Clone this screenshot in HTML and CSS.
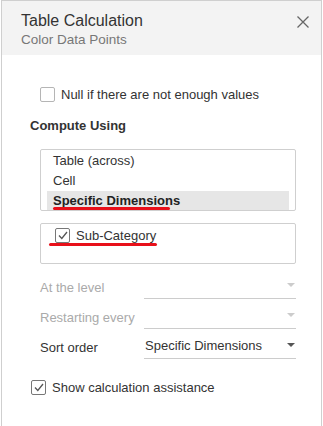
FILE: index.html
```html
<!DOCTYPE html>
<html>
<head>
<meta charset="utf-8">
<link rel="stylesheet" href="styles.css">
</head>
<body>
<div class="panel">
  <div class="header">
    <div class="titles">
      <div class="title">Table Calculation</div>
      <div class="subtitle">Color Data Points</div>
    </div>
    <svg class="close" width="12" height="12" viewBox="0 0 12 12"><path d="M0.5 0.5 L11.5 11.5 M11.5 0.5 L0.5 11.5" stroke="#666" stroke-width="1.3" fill="none"/></svg>
  </div>
  <div class="body">
    <label class="check null-row"><span class="box"></span><span>Null if there are not enough values</span></label>
    <div class="section">Compute Using</div>
    <div class="list">
      <div class="item">Table (across)</div>
      <div class="item">Cell</div>
      <div class="item selected">Specific Dimensions</div>
    </div>
    <div class="dims">
      <div class="dim"><span class="box checked"><svg width="10" height="9" viewBox="0 0 10 9"><path d="M1 4.5 L3.8 7.5 L9 1" stroke="#555" stroke-width="1.3" fill="none"/></svg></span><span>Sub-Category</span><span class="dimline"></span></div>
    </div>
    <div class="field disabled"><span class="flabel">At the level</span><span class="fsel"><span></span><span class="arrow"></span></span></div>
    <div class="field disabled"><span class="flabel">Restarting every</span><span class="fsel"><span></span><span class="arrow"></span></span></div>
    <div class="field"><span class="flabel">Sort order</span><span class="fsel"><span>Specific Dimensions</span><span class="arrow"></span></span></div>
    <label class="check assist"><span class="box checked"><svg width="10" height="9" viewBox="0 0 10 9"><path d="M1 4.5 L3.8 7.5 L9 1" stroke="#555" stroke-width="1.3" fill="none"/></svg></span><span>Show calculation assistance</span></label>
  </div>
</div>
</body>
</html>
```
FILE: styles.css
```css
html, body { margin: 0; padding: 0; background: #fff; }
body { font-family: "Liberation Sans", Arial, sans-serif; color: #333; }
.panel {
  margin-left: 1px;
  height: 426px;
  border: 1px solid #cfcfcf;
  border-bottom: none;
  box-sizing: border-box;
  width: 321px;
}
.header {
  background: #f3f3f3;
  height: 54px;
  display: flex;
  justify-content: space-between;
  align-items: flex-start;
  padding: 10px 12px 0 19px;
  box-sizing: border-box;
}
.title { font-size: 16px; line-height: 19px; color: #333; }
.subtitle { font-size: 13.5px; line-height: 18px; color: #777; margin-top: 1px; }
.close { margin-top: 5px; }
.body { padding: 32px 0 0 0; }
.check { display: flex; align-items: center; font-size: 13px; color: #333; }
.box {
  width: 13px; height: 13px; border: 1px solid #b5b5b5; border-radius: 2px;
  display: inline-flex; align-items: center; justify-content: center;
  background: #fff; flex: none;
}
.box.checked { border-color: #777; }
.null-row { margin-left: 38px; gap: 6px; }
.section { font-weight: bold; font-size: 13px; margin: 16px 0 0 28px; }
.list {
  margin: 16px 0 0 38px; width: 256px; height: 62px; box-sizing: border-box;
  border: 1px solid #cfcfcf; border-radius: 2px; padding: 1px 6px 0;
  font-size: 13px;
}
.item { height: 20px; line-height: 20px; padding-left: 6px; }
.item.selected { height: 19px; background: #e6e6e6; font-weight: bold; color: #222; position: relative; }
.item.selected::after {
  content: ""; position: absolute; left: 6px; width: 117px; top: 16px; height: 3px;
  background: #e8101a; border-radius: 2px;
}
.dims {
  margin: 12px 0 0 38px; width: 256px; height: 41px; box-sizing: border-box;
  border: 1px solid #cfcfcf; border-radius: 2px; font-size: 13px;
}
.dim { position: relative; display: flex; align-items: center; gap: 6px; margin: 4px 0 0 14px; }
.dimline {
  position: absolute; left: -6px; width: 108px; top: 15px; height: 3px;
  background: #e8101a; border-radius: 2px;
}
.field { display: flex; align-items: flex-end; margin-left: 38px; height: 30px; font-size: 13px; }
.dims + .field { margin-top: 5px; }
.field.disabled { color: #aaa; }
.flabel { width: 104px; padding-bottom: 4px; }
.fsel {
  width: 152px; display: flex; justify-content: space-between; align-items: center;
  border-bottom: 1px solid #ccc; height: 24px; box-sizing: border-box; padding: 0 0 3px 1px;
  color: #333;
}
.arrow {
  width: 0; height: 0; border-left: 4px solid transparent; border-right: 4px solid transparent;
  border-top: 4px solid #555; margin-right: 1px;
}
.disabled .arrow { border-top-color: #ccc; }
.assist { margin: 21px 0 0 29px; gap: 6px; }
```
